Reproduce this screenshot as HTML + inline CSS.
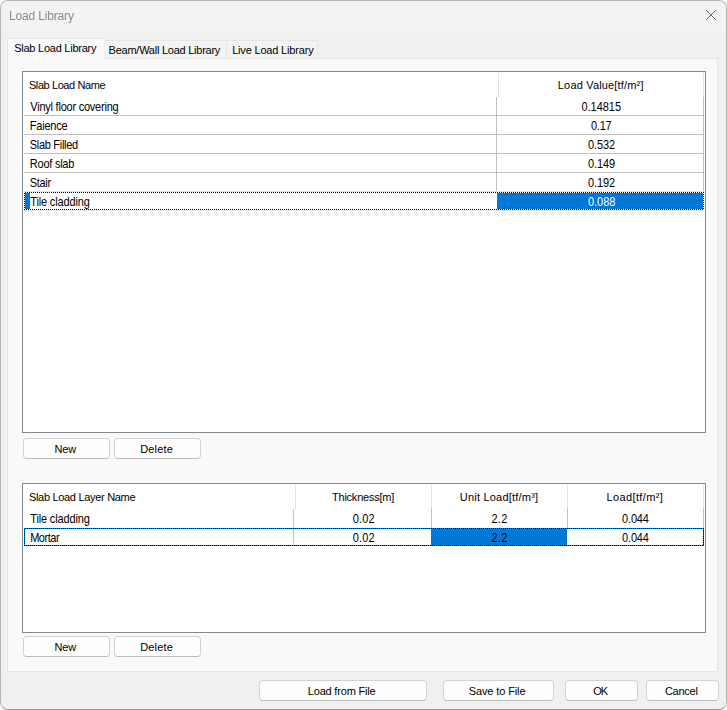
<!DOCTYPE html>
<html><head><meta charset="utf-8"><title>Load Library</title>
<style>
html,body{margin:0;padding:0;background:#fff;}
body{width:727px;height:710px;position:relative;overflow:hidden;font-family:"Liberation Sans",sans-serif;font-size:11px;color:#000;}
.a{position:absolute;box-sizing:border-box;}
.t{position:absolute;white-space:nowrap;line-height:13px;height:13px;}
.x{transform:scaleY(1.12);transform-origin:0 0;}
#win{left:0;top:0;width:727px;height:710px;background:#f0f0f0;border:1px solid #b4b4b4;border-bottom-color:#9a9a9a;border-radius:8px;overflow:hidden;}
#title{left:0;top:0;width:725px;height:30px;background:#f3f3f3;}
.btn{background:#fdfdfd;border:1px solid #d2d2d2;border-bottom-color:#bdbdbd;border-radius:4px;}
.tbl{background:#fff;border:1px solid #828790;}
.hl{background:#c0c0c0;}
.hd{background:#e3e3e3;}
.blue{background:#0078d7;}
</style></head><body>
<div class="a" id="win"><div class="a" id="title"></div></div>
<svg class="a" style="left:705px;top:9px" width="12" height="12" viewBox="0 0 12 12"><path d="M1 1 L11 11 M11 1 L1 11" stroke="#6e6e6e" stroke-width="1" fill="none"/></svg>

<!-- tab page -->
<div class="a" style="left:7px;top:58px;width:711px;height:614px;background:#f9f9f9;border:1px solid #e5e5e5;"></div>
<!-- tabs -->
<div class="a" style="left:7px;top:38px;width:98px;height:21px;background:#f9f9f9;border:1px solid #e5e5e5;border-bottom:none;"></div>
<div class="a" style="left:104px;top:40px;width:123px;height:18px;background:#f3f3f3;border:1px solid #e5e5e5;border-bottom:none;border-left:none;"></div>
<div class="a" style="left:227px;top:40px;width:91px;height:18px;background:#f3f3f3;border:1px solid #e5e5e5;border-bottom:none;border-left:none;"></div>

<!-- table 1 -->
<div class="a tbl" style="left:22px;top:71px;width:684px;height:362px;"></div>
<div class="a hd" style="left:498px;top:73px;width:1px;height:24px;"></div>
<div class="a hd" style="left:703px;top:73px;width:1px;height:24px;"></div>
<div class="a hl" style="left:496px;top:97px;width:1px;height:95px;"></div>
<div class="a hl" style="left:703px;top:97px;width:1px;height:95px;"></div>
<div class="a hl" style="left:24px;top:115px;width:680px;height:1px;"></div>
<div class="a hl" style="left:24px;top:134px;width:680px;height:1px;"></div>
<div class="a hl" style="left:24px;top:153px;width:680px;height:1px;"></div>
<div class="a hl" style="left:24px;top:172px;width:680px;height:1px;"></div>
<div class="a blue" style="left:25px;top:193px;width:5px;height:16px;"></div>
<div class="a blue" style="left:497px;top:193px;width:206px;height:16px;"></div>
<div class="a" style="left:24px;top:191px;width:680px;height:1px;background:#e2e2e2;"></div>
<div class="a" style="left:24px;top:210px;width:680px;height:1px;background:#e2e2e2;"></div>
<div class="a" style="left:24px;top:192px;width:680px;height:1px;background:repeating-linear-gradient(90deg,#fff 0 1px,#000 1px 2px);"></div>
<div class="a" style="left:24px;top:209px;width:680px;height:1px;background:repeating-linear-gradient(90deg,#000 0 1px,#fff 1px 2px);"></div>
<div class="a" style="left:24px;top:192px;width:1px;height:18px;background:repeating-linear-gradient(180deg,#fff 0 1px,#000 1px 2px);"></div>
<div class="a" style="left:703px;top:192px;width:1px;height:18px;background:repeating-linear-gradient(180deg,#000 0 1px,#fff 1px 2px);"></div>

<div class="a btn" style="left:23px;top:438px;width:87px;height:21px;"></div>
<div class="a btn" style="left:114px;top:438px;width:87px;height:21px;"></div>

<!-- table 2 -->
<div class="a tbl" style="left:22px;top:483px;width:684px;height:150px;"></div>
<div class="a hd" style="left:295px;top:485px;width:1px;height:24px;"></div>
<div class="a hd" style="left:431px;top:485px;width:1px;height:24px;"></div>
<div class="a hd" style="left:567px;top:485px;width:1px;height:24px;"></div>
<div class="a hd" style="left:703px;top:485px;width:1px;height:24px;"></div>
<div class="a hl" style="left:293px;top:509px;width:1px;height:36px;"></div>
<div class="a hl" style="left:431px;top:509px;width:1px;height:19px;"></div>
<div class="a hl" style="left:567px;top:509px;width:1px;height:19px;"></div>
<div class="a hl" style="left:703px;top:509px;width:1px;height:19px;"></div>
<div class="a blue" style="left:431px;top:529px;width:136px;height:16px;"></div>
<div class="a" style="left:24px;top:528px;width:680px;height:1px;background:repeating-linear-gradient(90deg,#0078d7 0 1px,#000 1px 2px);"></div>
<div class="a" style="left:24px;top:545px;width:680px;height:1px;background:repeating-linear-gradient(90deg,#000 0 1px,#0078d7 1px 2px);"></div>
<div class="a" style="left:24px;top:528px;width:1px;height:18px;background:repeating-linear-gradient(180deg,#0078d7 0 1px,#000 1px 2px);"></div>
<div class="a" style="left:703px;top:528px;width:1px;height:18px;background:repeating-linear-gradient(180deg,#000 0 1px,#0078d7 1px 2px);"></div>

<div class="a btn" style="left:23px;top:636px;width:87px;height:21px;"></div>
<div class="a btn" style="left:114px;top:636px;width:87px;height:21px;"></div>

<!-- bottom buttons -->
<div class="a btn" style="left:259px;top:680px;width:168px;height:21px;"></div>
<div class="a btn" style="left:443px;top:680px;width:111px;height:21px;"></div>
<div class="a btn" style="left:565px;top:680px;width:73px;height:21px;"></div>
<div class="a btn" style="left:646px;top:680px;width:73px;height:21px;"></div>

<div class="t" style="left:8.9px;top:10px;letter-spacing:-0.16px;color:#8c8c8c;font-size:12px;will-change:transform;">Load Library</div>
<div class="t" style="left:14.16px;top:42px;letter-spacing:-0.24px;">Slab Load Library</div>
<div class="t" style="left:108.6px;top:44px;letter-spacing:-0.25px;">Beam/Wall Load Library</div>
<div class="t" style="left:232.13px;top:44px;letter-spacing:-0.18px;">Live Load Library</div>
<div class="t" style="left:28.93px;top:79px;letter-spacing:-0.41px;">Slab Load Name</div>
<div class="t" style="left:557.82px;top:79px;letter-spacing:0.17px;">Load Value[tf/m²]</div>
<div class="t x" style="left:30.3px;top:100px;letter-spacing:-0.23px;">Vinyl floor covering</div>
<div class="t x" style="left:29.82px;top:119px;letter-spacing:-0.23px;">Faience</div>
<div class="t x" style="left:29.71px;top:138px;letter-spacing:-0.29px;">Slab Filled</div>
<div class="t x" style="left:29.82px;top:157px;letter-spacing:-0.24px;">Roof slab</div>
<div class="t x" style="left:29.71px;top:176px;letter-spacing:-0.3px;">Stair</div>
<div class="t x" style="left:30.22px;top:195px;letter-spacing:-0.15px;">Tile cladding</div>
<div class="t x" style="left:581.39px;top:100px;letter-spacing:-0.01px;">0.14815</div>
<div class="t x" style="left:590.92px;top:119px;letter-spacing:-0.21px;">0.17</div>
<div class="t x" style="left:588px;top:138px;letter-spacing:-0.08px;">0.532</div>
<div class="t x" style="left:588px;top:157px;letter-spacing:-0.08px;">0.149</div>
<div class="t x" style="left:588px;top:176px;letter-spacing:-0.08px;">0.192</div>
<div class="t x" style="left:588px;top:195px;letter-spacing:-0.05px;color:#fff;">0.088</div>
<div class="t" style="left:54.38px;top:443px;letter-spacing:-0.07px;">New</div>
<div class="t" style="left:140.13px;top:443px;letter-spacing:0.17px;">Delete</div>
<div class="t" style="left:28.93px;top:491px;letter-spacing:-0.31px;">Slab Load Layer Name</div>
<div class="t" style="left:332.01px;top:491px;letter-spacing:-0.23px;">Thickness[m]</div>
<div class="t" style="left:459.76px;top:491px;letter-spacing:0.21px;">Unit Load[tf/m³]</div>
<div class="t" style="left:606.57px;top:491px;letter-spacing:0.37px;">Load[tf/m²]</div>
<div class="t x" style="left:30.22px;top:512px;letter-spacing:-0.15px;">Tile cladding</div>
<div class="t x" style="left:30.13px;top:531px;letter-spacing:-0.46px;">Mortar</div>
<div class="t x" style="left:352.69px;top:512px;letter-spacing:0.15px;">0.02</div>
<div class="t x" style="left:352.69px;top:531px;letter-spacing:0.15px;">0.02</div>
<div class="t x" style="left:491.51px;top:512px;letter-spacing:0.25px;">2.2</div>
<div class="t x" style="left:491.51px;top:531px;letter-spacing:0.25px;">2.2</div>
<div class="t x" style="left:622.08px;top:512px;letter-spacing:-0.17px;">0.044</div>
<div class="t x" style="left:622.08px;top:531px;letter-spacing:-0.17px;">0.044</div>
<div class="t" style="left:54.38px;top:641px;letter-spacing:-0.07px;">New</div>
<div class="t" style="left:140.13px;top:641px;letter-spacing:0.17px;">Delete</div>
<div class="t" style="left:307.8px;top:685px;letter-spacing:-0.19px;">Load from File</div>
<div class="t" style="left:468.68px;top:685px;letter-spacing:-0.11px;">Save to File</div>
<div class="t" style="left:593.13px;top:685px;letter-spacing:-0.84px;">OK</div>
<div class="t" style="left:664.91px;top:685px;letter-spacing:-0.25px;">Cancel</div>
</body></html>
